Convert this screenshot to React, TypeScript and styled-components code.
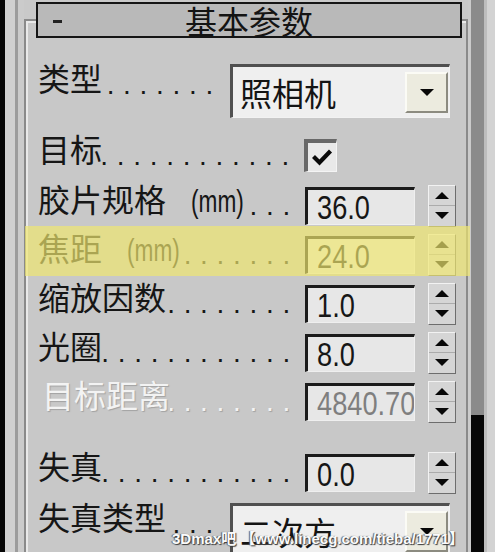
import React from 'react';
import styled, { createGlobalStyle } from 'styled-components';

const CJK = `'Noto Sans CJK SC', 'Noto Sans CJK JP', 'Noto Sans', sans-serif`;
const NUM = `'Liberation Sans', Arial, sans-serif`;

const GlobalStyle = createGlobalStyle`
  html, body {
    margin: 0;
    padding: 0;
    background: #c9c9c9;
  }
  body {
    font-family: ${CJK};
  }
`;

const Screen = styled.div`
  position: relative;
  display: flex;
  width: 495px;
  height: 552px;
  overflow: hidden;
  background: #c9c9c9;
`;

const LeftRail = styled.div`
  width: 24px;
  flex-shrink: 0;
  background: linear-gradient(
    to right,
    #060606 0 5px,
    #d0d0d0 5px 15px,
    #9c9c9c 15px 18px,
    #cbcbcb 18px 24px
  );
`;

const RightRail = styled.div`
  width: 27px;
  flex-shrink: 0;
  display: flex;
  padding-left: 3px;
  box-sizing: border-box;
  background: linear-gradient(
    to right,
    #cbcbcb 0 3px,
    transparent 3px 16px,
    #bdbdbd 16px 19px,
    #d3d3d3 19px
  );
`;

const ScrollTrack = styled.div`
  width: 13px;
  background: linear-gradient(to bottom, #8b8b8b 0 415px, #070707 415px);
`;

const Main = styled.div`
  flex: 1;
  min-width: 0;
  display: flex;
  flex-direction: column;
`;

const Header = styled.div`
  position: relative;
  z-index: 1;
  display: grid;
  grid-template-columns: 1fr auto 1fr;
  align-items: center;
  height: 40px;
  margin: 2px 6px -19px 12px;
  box-sizing: border-box;
  border: 2px solid #151515;
  background: #b9b9b9;
`;

const Collapse = styled.span`
  justify-self: start;
  width: 9px;
  height: 3px;
  margin: 3px 0 0 15px;
  background: #222;
`;

const Title = styled.span`
  font-size: 32px;
  line-height: 32px;
  color: #141414;
`;

const Group = styled.div`
  flex: 1;
  display: flex;
  flex-direction: column;
  padding: 43px 10px 0 12px;
  border: 2px solid #8a8a8a;
  border-bottom: none;
  box-shadow: inset 2px 2px 0 #e9e9e9;
  background: #c8c8c8;
`;

const Row = styled.div<{ $h: number; $align?: string; $top?: number; $pad?: number }>`
  position: relative;
  display: flex;
  align-items: ${(p) => p.$align || 'center'};
  height: ${(p) => p.$h}px;
  flex-shrink: 0;
  margin-top: ${(p) => p.$top || 0}px;
  padding-top: ${(p) => p.$pad || 0}px;
  box-sizing: border-box;
`;

const Label = styled.div<{ $lift?: number; $gap?: number; $off?: boolean; $indent?: number }>`
  flex: 1;
  min-width: 0;
  display: flex;
  align-items: baseline;
  font-size: 32px;
  line-height: 32px;
  color: ${(p) => (p.$off ? '#f3f3f3' : '#161616')};
  text-shadow: ${(p) => (p.$off ? '1px 1px 1px #a2a2a2' : 'none')};
  margin-bottom: ${(p) => p.$lift ?? 0}px;
  margin-top: ${(p) => (p.$lift === undefined ? -3 : 0)}px;
  margin-right: ${(p) => p.$gap ?? 6}px;
  padding-left: ${(p) => p.$indent || 0}px;
`;

const Name = styled.span`
  flex-shrink: 0;
  white-space: nowrap;
`;

// the panel's bitmap font is narrow: squeeze the latin glyphs
const Unit = styled.span`
  display: inline-block;
  margin: 0 -18px 0 25px;
  font-family: ${NUM};
  font-size: 31px;
  transform: scaleX(0.73);
  transform-origin: left center;
`;

const Leader = styled.span`
  flex: 1;
  min-width: 0;
  display: flex;
  justify-content: flex-end;
  overflow: hidden;
`;

const Dots = styled.span`
  flex-shrink: 0;
  white-space: nowrap;
  font-family: 'Liberation Sans', Arial, sans-serif;
  font-size: 28px;
  letter-spacing: 8.7px;
  transform: translateY(3px);
`;

const Field = styled.div<{ $off?: boolean }>`
  width: 110px;
  height: 38px;
  flex-shrink: 0;
  display: flex;
  align-items: center;
  box-sizing: border-box;
  padding-left: 9px;
  overflow: hidden;
  white-space: nowrap;
  border-style: solid;
  border-width: 3px 1px 1px 3px;
  border-color: #1b1b1b #efefef #efefef #1b1b1b;
  background: #e7e7e7;
  font-family: ${NUM};
  font-size: 34px;
  line-height: 34px;
  color: ${(p) => (p.$off ? '#7f7f7f' : '#161616')};
`;

const Value = styled.span`
  display: inline-block;
  transform: scaleX(0.8);
  transform-origin: left center;
`;

const Spinner = styled.div`
  width: 28px;
  height: 42px;
  flex-shrink: 0;
  margin-left: 13px;
  display: flex;
  flex-direction: column;
  box-sizing: border-box;
  border: 1px solid;
  border-color: #f2f2f2 #6d6d6d #6d6d6d #f2f2f2;
  background: #d5d5d5;
`;

const SpinHalf = styled.div<{ $top?: boolean }>`
  flex: 1;
  display: flex;
  align-items: center;
  justify-content: center;
  border-bottom: ${(p) => (p.$top ? '1px solid #ababab' : 'none')};
`;

const Arrow = styled.span<{ $up?: boolean }>`
  width: 0;
  height: 0;
  border-left: 7px solid transparent;
  border-right: 7px solid transparent;
  ${(p) => (p.$up ? 'border-bottom: 7px solid #080808;' : 'border-top: 7px solid #080808;')}
`;

const Dropdown = styled.div`
  width: 220px;
  height: 54px;
  flex-shrink: 0;
  margin-right: 6px;
  display: flex;
  align-items: center;
  box-sizing: border-box;
  padding: 0 1px 0 7px;
  border-style: solid;
  border-width: 3px 1px 1px 3px;
  border-color: #505050 #f2f2f2 #f2f2f2 #505050;
  background: #efefef;
  font-size: 32px;
  line-height: 32px;
  color: #141414;
`;

const DropButton = styled.div`
  margin-left: auto;
  width: 43px;
  height: 41px;
  display: flex;
  align-items: center;
  justify-content: center;
  box-sizing: border-box;
  border: 2px solid;
  border-color: #fbfbf5 #8c8b80 #8c8b80 #fbfbf5;
  background: #ecebdf;
`;

const CheckBox = styled.div`
  width: 33px;
  height: 33px;
  flex-shrink: 0;
  margin-right: 119px;
  display: flex;
  align-items: center;
  justify-content: center;
  box-sizing: border-box;
  border-style: solid;
  border-width: 4px 1px 1px 4px;
  border-color: #686868 #f4f4f4 #f4f4f4 #686868;
  background: #e9e9e9;
`;

const Highlight = styled.div`
  position: absolute;
  left: -13px;
  right: -14px;
  top: -4px;
  bottom: 3px;
  background: rgba(240, 232, 110, 0.68);
  pointer-events: none;
`;

const Watermark = styled.div`
  position: absolute;
  left: 172px;
  top: 530px;
  font-family: 'Liberation Sans', ${CJK};
  font-weight: bold;
  font-size: 15px;
  line-height: 18px;
  color: #fbfbfb;
  white-space: nowrap;
  text-shadow: 1px 1px 1px #3a3a3a, -1px 0 1px #5a5a5a;
`;

const DOTS = '.'.repeat(30);

function Leaders() {
  return (
    <Leader>
      <Dots>{DOTS}</Dots>
    </Leader>
  );
}

function Spin() {
  return (
    <Spinner>
      <SpinHalf $top>
        <Arrow $up />
      </SpinHalf>
      <SpinHalf>
        <Arrow />
      </SpinHalf>
    </Spinner>
  );
}

interface SpinRowProps {
  name: string;
  unit?: string;
  value: string;
  off?: boolean;
  indent?: number;
  top?: number;
  children?: React.ReactNode;
}

function SpinRow({ name, unit, value, off, indent, top, children }: SpinRowProps) {
  return (
    <Row $h={49} $top={top}>
      <Label $lift={10} $off={off} $indent={indent}>
        <Name>
          {name}
          {unit && <Unit>{unit}</Unit>}
        </Name>
        <Leaders />
      </Label>
      <Field $off={off}>
        <Value>{value}</Value>
      </Field>
      <Spin />
      {children}
    </Row>
  );
}

export default function App() {
  return (
    <>
      <GlobalStyle />
      <Screen>
        <LeftRail />
        <Main>
          <Header>
            <Collapse />
            <Title>基本参数</Title>
            <span />
          </Header>
          <Group>
            <Row $h={52} $align="flex-start">
              <Label $gap={8}>
                <Name>类型</Name>
                <Leaders />
              </Label>
              <Dropdown>
                照相机
                <DropButton>
                  <Arrow />
                </DropButton>
              </Dropdown>
            </Row>
            <Row $h={65} $pad={14}>
              <Label $lift={10}>
                <Name>目标</Name>
                <Leaders />
              </Label>
              <CheckBox>
                <svg width="22" height="18" viewBox="0 0 22 18">
                  <path d="M2.5 8.5 L8.5 14.5 L19.5 3" fill="none" stroke="#0a0a0a" strokeWidth="4.2" />
                </svg>
              </CheckBox>
            </Row>
            <SpinRow name="胶片规格" unit="(mm)" value="36.0" />
            <SpinRow name="焦距" unit="(mm)" value="24.0">
              <Highlight />
            </SpinRow>
            <SpinRow name="缩放因数" value="1.0" />
            <SpinRow name="光圈" value="8.0" />
            <SpinRow name="目标距离" value="4840.708" off indent={4} />
            <SpinRow name="失真" value="0.0" top={22} />
            <Row $h={54} $align="flex-start" $top={6}>
              <Label $gap={8}>
                <Name>失真类型</Name>
                <Leaders />
              </Label>
              <Dropdown>
                二次方
                <DropButton>
                  <Arrow />
                </DropButton>
              </Dropdown>
            </Row>
          </Group>
        </Main>
        <RightRail>
          <ScrollTrack />
        </RightRail>
        <Watermark>3Dmax吧 【www.linecg.com/tieba/1771】</Watermark>
      </Screen>
    </>
  );
}
